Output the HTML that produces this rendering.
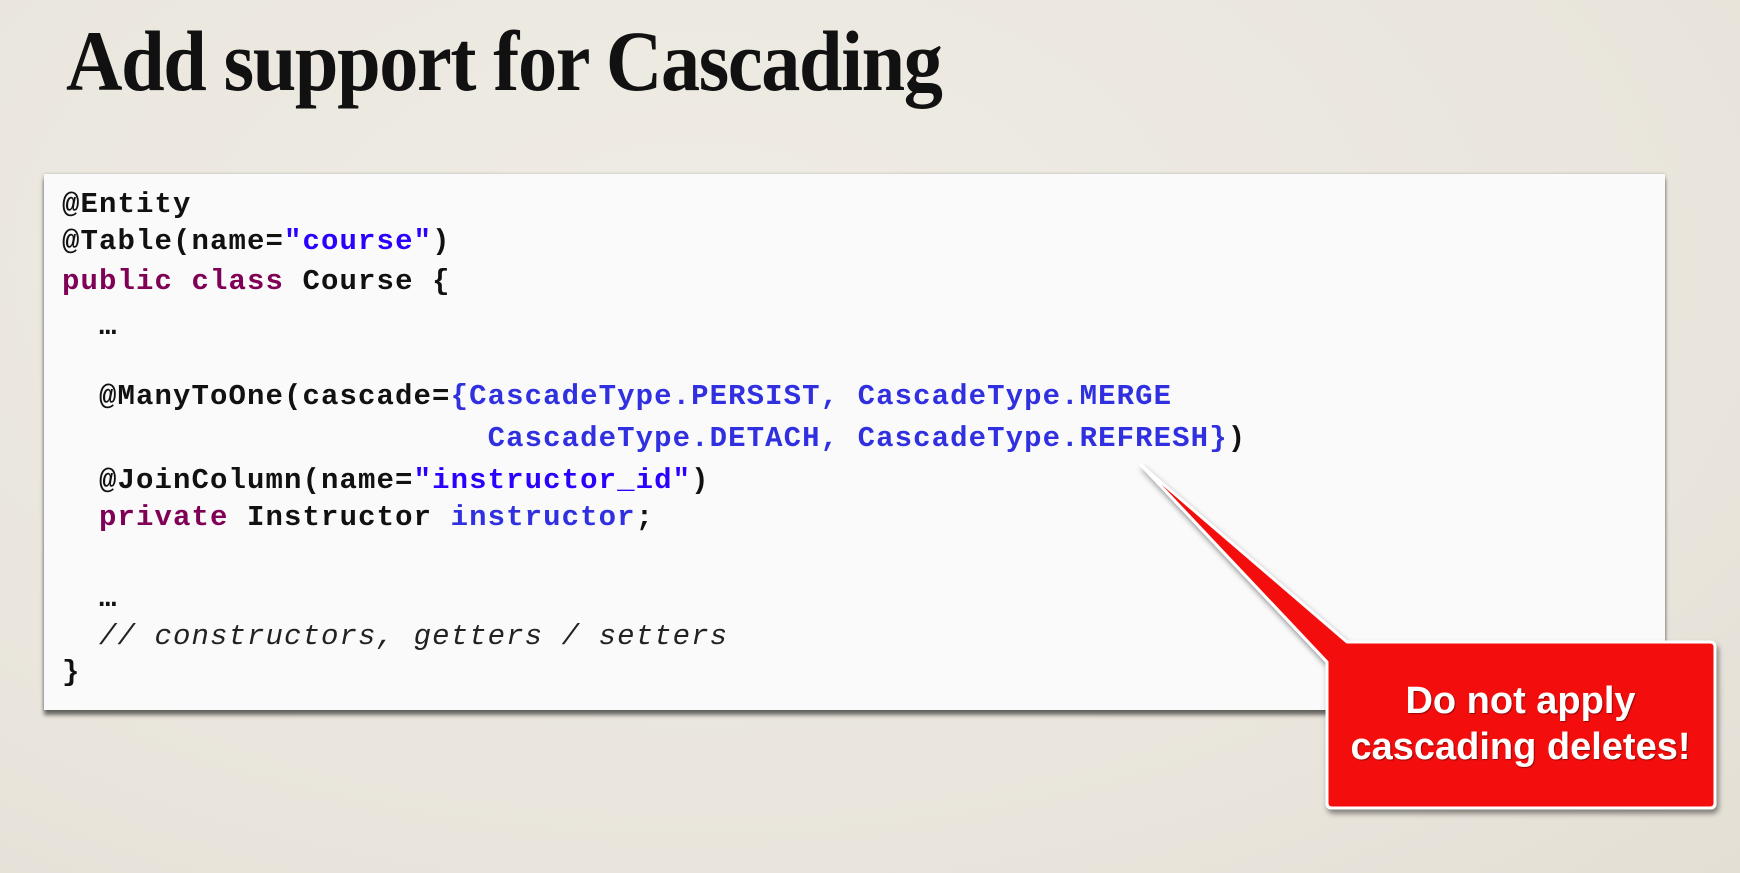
<!DOCTYPE html>
<html><head><meta charset="utf-8"><style>
html,body{margin:0;padding:0;}
body{width:1740px;height:873px;overflow:hidden;position:relative;background:#ebe7df;background-image:radial-gradient(ellipse at 40% 30%,#efece5 0%,#e9e5dc 70%,#e4dfd5 100%);font-family:"Liberation Sans",sans-serif;}
h1{position:absolute;left:66px;top:18px;margin:0;font-family:"Liberation Serif",serif;font-weight:bold;font-size:86px;line-height:1;letter-spacing:-1.5px;color:#111;transform:scaleX(0.91);transform-origin:left;white-space:nowrap;}
.code{position:absolute;left:44px;top:174px;width:1621px;height:536px;background:#fafafa;box-shadow:0 5px 4px rgba(0,0,0,.55),0 0 3px rgba(0,0,0,.2);}
.l{position:absolute;left:62px;height:40px;line-height:40px;margin:0;white-space:pre;font-family:"Liberation Mono",monospace;font-weight:bold;font-size:29px;letter-spacing:1.1px;color:#111;}
.k{color:#7f0055}.s{color:#2a00ff}.b{color:#3030e0}.c{font-style:italic;font-weight:normal;color:#222}
.callout{position:absolute;left:0;top:0;}
.txt{position:absolute;left:1327px;top:678px;width:387px;text-align:center;color:#fff;font-weight:bold;font-size:38px;line-height:46px;text-shadow:1px 1px 1px rgba(0,0,0,.4);white-space:nowrap;}
</style></head><body>
<h1>Add support for Cascading</h1>
<div class="code"></div>
<div class="l" style="top:185px">@Entity</div>
<div class="l" style="top:222px">@Table(name=<span class="s">"course"</span>)</div>
<div class="l" style="top:262px"><span class="k">public class</span> Course {</div>
<div class="l" style="top:307px">  …</div>
<div class="l" style="top:377px">  @ManyToOne(cascade=<span class="b">{CascadeType.PERSIST, CascadeType.MERGE</span></div>
<div class="l" style="top:419px">                       <span class="b">CascadeType.DETACH, CascadeType.REFRESH}</span>)</div>
<div class="l" style="top:461px">  @JoinColumn(name=<span class="s">"instructor_id"</span>)</div>
<div class="l" style="top:498px">  <span class="k">private</span> Instructor <span class="b">instructor</span>;</div>
<div class="l" style="top:579px">  …</div>
<div class="l" style="top:617px">  <span class="c">// constructors, getters / setters</span></div>
<div class="l" style="top:653px">}</div>
<svg class="callout" width="1740" height="873">
<defs><filter id="sh" x="-10%" y="-10%" width="130%" height="130%"><feDropShadow dx="2" dy="4" stdDeviation="3" flood-opacity=".45"/></filter></defs>
<path d="M1141,465 L1347,642 L1710,642 Q1715,642 1715,647 L1715,803 Q1715,808 1710,808 L1332,808 Q1327,808 1327,803 L1327,662 Z" fill="#f40f0f" stroke="#fff" stroke-width="3" stroke-linejoin="round" filter="url(#sh)"/>
</svg>
<div class="txt">Do not apply<br>cascading deletes!</div>
</body></html>
